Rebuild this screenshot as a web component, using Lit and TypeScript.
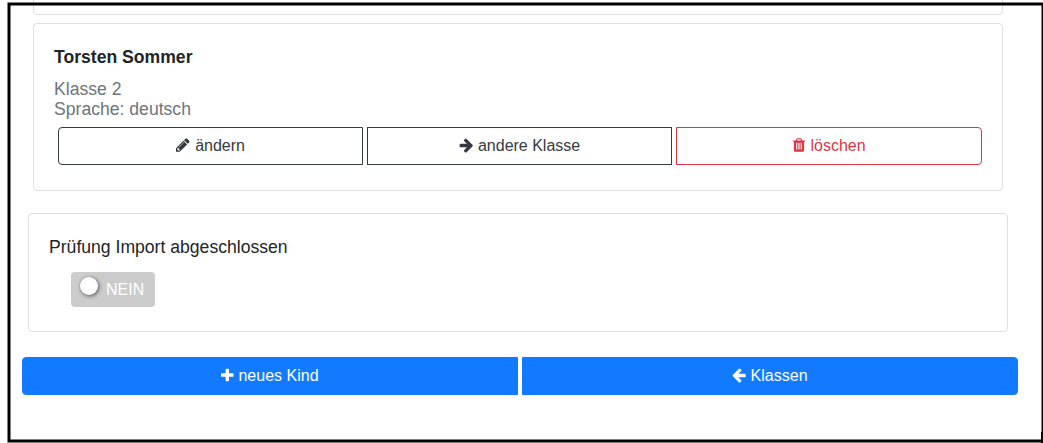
import { LitElement, html, css, svg } from "lit";
import { customElement, property } from "lit/decorators.js";

const ICONS: Record<string, { x: number; w: number; d: string }> = {
  pencil: { x: 128, w: 1536, d: "M491 1536l91-91-235-235-91 91v107h128v128h107zm523-928q0-22-22-22-10 0-17 7l-542 542q-7 7-7 17 0 22 22 22 10 0 17-7l542-542q7-7 7-17zm-54-192l416 416-832 832h-416v-416zm683 96q0 53-37 90l-166 166-416-416 166-165q36-38 90-38 53 0 91 38l235 234q37 39 37 91z" },
  right: { x: 128, w: 1536, d: "M1600 960q0 54-37 91l-651 651q-39 37-91 37-51 0-90-37l-75-75q-38-38-38-91t38-91l293-293h-704q-52 0-84.5-37.5t-32.5-90.5v-128q0-53 32.5-90.5t84.5-37.5h704l-293-294q-38-36-38-90t38-90l75-75q38-38 90-38 53 0 91 38l651 651q37 35 37 90z" },
  left: { x: 128, w: 1536, d: "M1664 896v128q0 53-32.5 90.5t-84.5 37.5h-704l293 294q38 36 38 90t-38 90l-75 76q-37 37-90 37-52 0-91-37l-651-652q-37-37-37-90 0-52 37-91l651-650q38-38 91-38 52 0 90 38l75 74q38 38 38 91t-38 91l-293 293h704q52 0 84.5 37.5t32.5 90.5z" },
  trash: { x: 192, w: 1408, d: "M704 1376v-704q0-14-9-23t-23-9h-64q-14 0-23 9t-9 23v704q0 14 9 23t23 9h64q14 0 23-9t9-23zm256 0v-704q0-14-9-23t-23-9h-64q-14 0-23 9t-9 23v704q0 14 9 23t23 9h64q14 0 23-9t9-23zm256 0v-704q0-14-9-23t-23-9h-64q-14 0-23 9t-9 23v704q0 14 9 23t23 9h64q14 0 23-9t9-23zm-544-992h448l-48-117q-7-9-17-11h-317q-10 2-17 11zm928 32v64q0 14-9 23t-23 9h-96v948q0 83-47 143.5t-113 60.5h-832q-66 0-113-58.5t-47-141.5v-952h-96q-14 0-23-9t-9-23v-64q0-14 9-23t23-9h309l70-167q15-37 54-63t79-26h320q40 0 79 26t54 63l70 167h309q14 0 23 9t9 23z" },
  plus: { x: 192, w: 1408, d: "M1600 736v192q0 40-28 68t-68 28h-416v416q0 40-28 68t-68 28h-192q-40 0-68-28t-28-68v-416h-416q-40 0-68-28t-28-68v-192q0-40 28-68t68-28h416v-416q0-40 28-68t68-28h192q40 0 68 28t28 68v416h416q40 0 68 28t28 68z" },
};

@customElement("fa-icon")
class FaIcon extends LitElement {
  @property() name = "plus";
  static styles = css`
    :host { display: inline-block; height: 16px; vertical-align: -2.3px; }
    svg { display: block; height: 16px; fill: currentColor; overflow: visible; }
    .pencil { transform: translateX(-1px); }
    .right { transform: translateX(-0.4px); }
    .trash { transform: translateX(-0.3px); }
    .plus { transform: translateY(0.6px); }
  `;
  render() {
    const i = ICONS[this.name];
    return html`<svg class=${this.name} width=${(i.w / 1792) * 16} height="16" viewBox="${i.x} 0 ${i.w} 1792">${svg`<path d=${i.d}></path>`}</svg>`;
  }
}

@customElement("app-root")
class AppRoot extends LitElement {
  static styles = css`
    :host {
      display: block; position: relative; box-sizing: border-box;
      width: 1043px; height: 443px; overflow: hidden; background: #fff;
      color: #212529; font: 16px/24px "Liberation Sans", Arial, sans-serif;
    }
    * { box-sizing: border-box; }
    .page { display: flex; flex-direction: column; padding: 0 25px 0 22px; }
    .card { border: 1px solid #dfdfdf; border-radius: 4px; padding: 20px; }
    .previous { height: 15px; margin: 0 15px 8px 11px; border-top: 0; border-radius: 0 0 4px 4px; padding: 0; }
    .child { height: 168px; margin: 0 15px 22px 11px; padding-top: 22px; }
    .check { height: 119px; margin: 0 10px 25px 6px; padding-top: 22px; }
    .name, .meta, .label { font-size: 17.6px; line-height: 22px; margin: 0; }
    .name { font-weight: 700; }
    .meta { color: #6c757d; line-height: 20px; margin-top: 11px; }
    .row { display: grid; grid-template-columns: 1fr 1fr; gap: 4px; }
    .actions { grid-template-columns: 305px 305px 1fr; margin: 8px 0 0 4px; }
    .btn {
      height: 38px; padding: 6px 12px; margin: 0; border: 1px solid #343a40;
      background: transparent; color: #343a40; font: inherit; text-align: center; white-space: nowrap;
    }
    .actions .btn { padding-left: 13px; }
    .btn:first-child { border-radius: 4px 0 0 4px; }
    .btn:last-child { border-radius: 0 4px 4px 0; }
    .danger { border-color: #dc3545; color: #dc3545; }
    .primary { background: #117aff; border-color: #117aff; color: #fff; }
    .footer { width: 996px; }
    .toggle {
      display: flex; width: 84px; height: 35px; margin: 14px 0 0 22px; padding: 5px 0 0 9px;
      gap: 8px; background: #ccc; border-radius: 4px; color: #fff;
    }
    .knob { width: 18px; height: 18px; border-radius: 50%; background: #fff; box-shadow: 1px 1px 4px rgba(0,0,0,.6); }
    .state { padding-top: 1px; }
    .frame { position: absolute; inset: 0; width: 1043px; height: 443px; pointer-events: none; }
  `;
  render() {
    return html`
      <main class="page">
        <section class="card previous"></section>
        <section class="card child">
          <h5 class="name">Torsten Sommer</h5>
          <p class="meta">Klasse 2<br />Sprache: deutsch</p>
          <div class="row actions">
            <button class="btn"><fa-icon name="pencil"></fa-icon> ändern</button>
            <button class="btn"><fa-icon name="right"></fa-icon> andere Klasse</button>
            <button class="btn danger"><fa-icon name="trash"></fa-icon> löschen</button>
          </div>
        </section>
        <section class="card check">
          <p class="label">Prüfung Import abgeschlossen</p>
          <div class="toggle"><span class="knob"></span><span class="state">NEIN</span></div>
        </section>
        <div class="row footer">
          <button class="btn primary"><fa-icon name="plus"></fa-icon> neues Kind</button>
          <button class="btn primary"><fa-icon name="left"></fa-icon> Klassen</button>
        </div>
      </main>
      <svg class="frame" viewBox="0 0 1043 443">
        <rect x="9" y="4" width="1034" height="437" fill="none" stroke="#000" stroke-width="3"></rect>
        <rect x="1041" y="432" width="2" height="11"></rect>
      </svg>
    `;
  }
}
